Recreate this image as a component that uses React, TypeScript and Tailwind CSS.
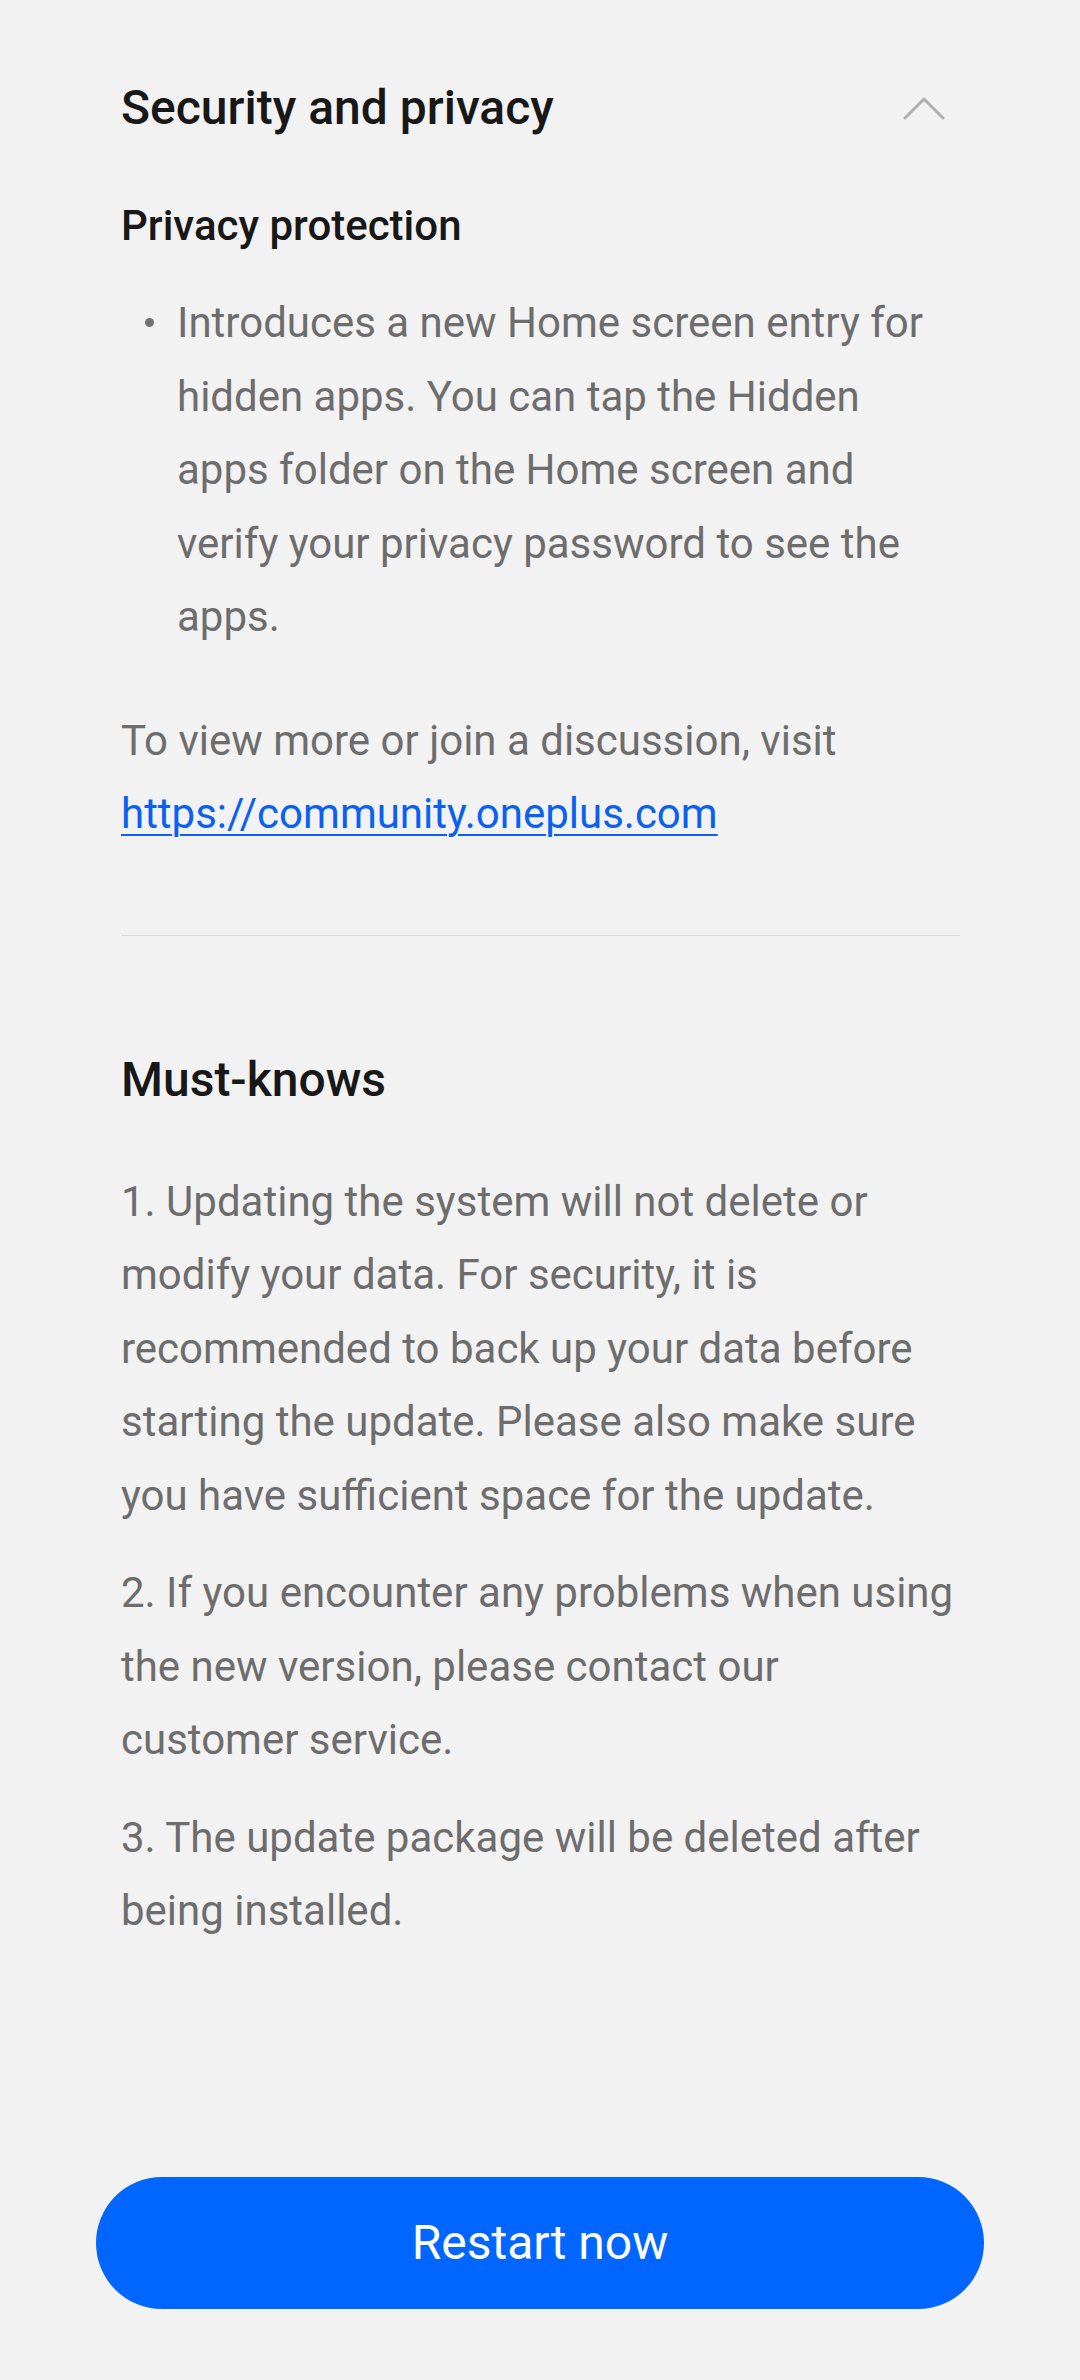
import { ReactNode } from "react";

const BODY = "text-[42px] leading-[73.5px] text-[#6d6d6d]";

const MUST_KNOWS = [
  "1. Updating the system will not delete or modify your data. For security, it is recommended to back up your data before starting the update. Please also make sure you have sufficient space for the update.",
  "2. If you encounter any problems when using the new version, please contact our customer service.",
  "3. The update package will be deleted after being installed.",
];

function ChevronUp() {
  return (
    <svg width="44" height="26" viewBox="0 0 44 26" fill="none" className="mr-[14px]">
      <path d="M3 23 L22 4 L41 23" stroke="#b0b0b0" strokeWidth="3" strokeLinecap="round" strokeLinejoin="round" />
    </svg>
  );
}

function Bullet({ children }: { children: ReactNode }) {
  return (
    <div className="flex">
      <span className="w-[56px] shrink-0 flex justify-center">
        <span className="mt-[32px] w-[9px] h-[9px] rounded-full bg-[#737373]" />
      </span>
      <p className={BODY}>{children}</p>
    </div>
  );
}

export default function App() {
  return (
    <div
      className="min-h-screen flex flex-col bg-[#f2f2f2]"
      style={{ fontFamily: "Roboto, 'Noto Sans', sans-serif" }}
    >
      <div className="px-[121px] pr-[120px]">
        <div className="pt-[78px] h-[138px] flex items-center justify-between">
          <h2 className="text-[48px] leading-[60px] font-medium text-[#181818]">Security and privacy</h2>
          <ChevronUp />
        </div>

        <h3 className="mt-[60px] text-[42px] leading-[56px] font-medium text-[#181818]">Privacy protection</h3>

        <div className="mt-[32px]">
          <Bullet>
            Introduces a new Home screen entry for hidden apps. You can tap the Hidden apps folder on the Home
            screen and verify your privacy password to see the apps.
          </Bullet>
        </div>

        <p className={`mt-[50px] ${BODY}`}>
          To view more or join a discussion, visit{" "}
          <a href="#" className="text-[#0a60f0] underline underline-offset-[6px] decoration-[2px]">
            https://community.oneplus.com
          </a>
        </p>

        <div className="mt-[84px] h-px bg-[#d9d9d9]" />

        <h2 className="mt-[114px] text-[48px] leading-[60px] font-medium text-[#181818]">Must-knows</h2>

        <div className="mt-[55px] flex flex-col gap-[24px]">
          {MUST_KNOWS.map((t, i) => (
            <p key={i} className={BODY}>
              {t}
            </p>
          ))}
        </div>
      </div>

      <div className="mt-auto px-[96px] pb-[71px]">
        <button className="w-full h-[132px] rounded-full bg-[#0066ff] text-white text-[48px] font-normal">
          Restart now
        </button>
      </div>
    </div>
  );
}
